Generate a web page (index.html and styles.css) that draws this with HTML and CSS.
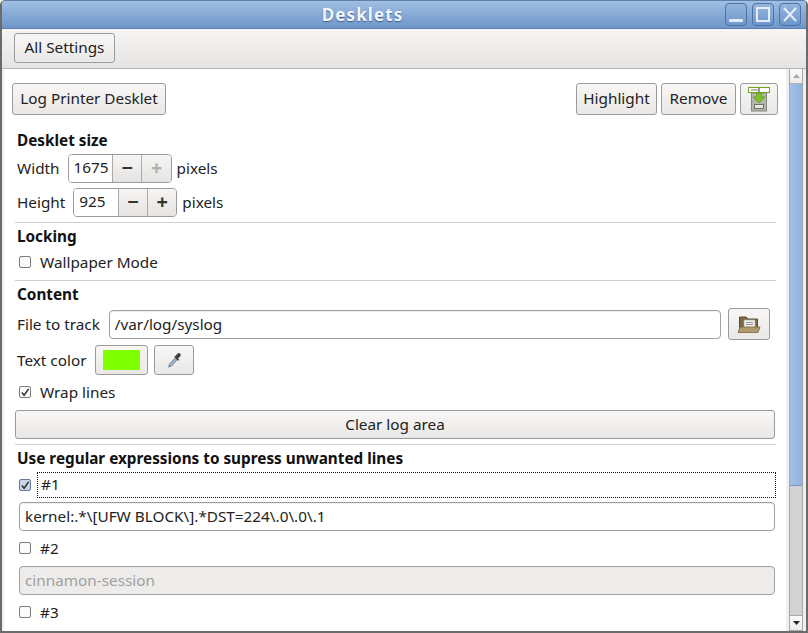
FILE: index.html
```html
<!DOCTYPE html>
<html lang="en">
<head>
    <meta charset="UTF-8">
    <title>Desklets</title>
    <link rel="stylesheet" href="styles.css">
</head>
<body>
    <div class="window">
        <div class="titlebar">
            <div class="title">Desklets</div>
            <div class="wm-buttons">
                <div class="wm-btn"><svg width="20" height="21" viewBox="0 0 20 21"><rect x="3" y="15" width="14" height="3" rx="1" fill="#e4edf8"/></svg></div>
                <div class="wm-btn"><svg width="20" height="21" viewBox="0 0 20 21"><rect x="4" y="4" width="12" height="13" fill="none" stroke="#e4edf8" stroke-width="2"/></svg></div>
                <div class="wm-btn"><svg width="20" height="21" viewBox="0 0 20 21"><path d="M4 4 L16 17 M16 4 L4 17" stroke="#e4edf8" stroke-width="2.2"/></svg></div>
            </div>
        </div>
        <div class="toolbar">
            <button class="btn settings-btn">All Settings</button>
        </div>
        <div class="main">
            <div class="content">
                <div class="top-row">
                    <button class="btn name-btn">Log Printer Desklet</button>
                    <div class="spacer"></div>
                    <button class="btn highlight-btn">Highlight</button>
                    <button class="btn remove-btn">Remove</button>
                    <button class="btn icon-btn">
                        <svg width="24" height="26" viewBox="0 0 24 26">
                            <rect x="4.5" y="7" width="15" height="18" fill="#b4b6ae" stroke="#85877f"/>
                            <rect x="7.5" y="18.5" width="9" height="4" fill="#e8e9e5" stroke="#6f716b"/>
                            <rect x="1.5" y="1.5" width="21" height="5" fill="#fff" stroke="#6ea51a"/>
                            <rect x="4" y="3" width="7" height="2" fill="#bbb"/>
                            <rect x="11.5" y="2" width="1" height="4" fill="#333"/>
                            <path d="M9.5 7 H14.5 V11 H18 L12 17 L6 11 H9.5 Z" fill="#7fc02a" stroke="#5d961b" stroke-width="0.7"/>
                        </svg>
                    </button>
                </div>

                <div class="heading heading-first">Desklet size</div>
                <div class="row size-row">
                    <span class="size-label">Width</span>
                    <div class="spinner">
                        <div class="spin-value">1675</div>
                        <div class="spin-btn">&#8722;</div>
                        <div class="spin-btn spin-off">+</div>
                    </div>
                    <span class="size-label">pixels</span>
                </div>
                <div class="row size-row size-row-2">
                    <span class="size-label">Height</span>
                    <div class="spinner">
                        <div class="spin-value">925</div>
                        <div class="spin-btn">&#8722;</div>
                        <div class="spin-btn">+</div>
                    </div>
                    <span class="size-label">pixels</span>
                </div>
                <div class="sep sep-1"></div>

                <div class="heading">Locking</div>
                <div class="check-row check-wallpaper">
                    <span class="check"></span>
                    <span>Wallpaper Mode</span>
                </div>
                <div class="sep sep-2"></div>

                <div class="heading">Content</div>
                <div class="row file-row">
                    <span>File to track</span>
                    <div class="entry file-entry">/var/log/syslog</div>
                    <button class="btn folder-btn">
                        <svg width="24" height="20" viewBox="0 0 24 20">
                            <path d="M2.5 16 V3 H9 L11 5 H20.5 V16 Z" fill="#7d6849" stroke="#5e4d33"/>
                            <rect x="7" y="6" width="11" height="8" fill="#eeeeea" stroke="#aaa" stroke-width="0.6"/>
                            <rect x="9" y="8" width="7" height="1" fill="#999"/>
                            <rect x="9" y="10" width="7" height="1" fill="#999"/>
                            <path d="M3 13 H23 L21 18.5 H1 Z" fill="#b19a6e" stroke="#7a6642" stroke-width="0.8"/>
                        </svg>
                    </button>
                </div>
                <div class="row color-row">
                    <span>Text color</span>
                    <button class="btn color-btn"><span class="swatch"></span></button>
                    <button class="btn pick-btn">
                        <svg width="16" height="18" viewBox="0 0 16 18">
                            <path d="M9 7 L3.5 13 L2.5 16 L5.5 15 L11 9 Z" fill="#9fb4cc" stroke="#5f7690" stroke-width="0.8"/>
                            <path d="M8 5.5 L12.5 10 L13 8 L12 7.5 L14.5 5 A2 2 0 0 0 11.5 2.5 L9.5 5 Z" fill="#3d3d3d"/>
                        </svg>
                    </button>
                </div>
                <div class="check-row check-wrap">
                    <span class="check checked"><svg width="11" height="11" viewBox="0 0 11 11"><path d="M2 5.5 L4.5 8.5 L9.5 1.5" fill="none" stroke="#333" stroke-width="1.7"/></svg></span>
                    <span>Wrap lines</span>
                </div>
                <button class="btn clear-btn">Clear log area</button>
                <div class="sep sep-3"></div>

                <div class="heading">Use regular expressions to supress unwanted lines</div>
                <div class="check-row check-focus">
                    <span class="check checked active"><svg width="11" height="11" viewBox="0 0 11 11"><path d="M2 5.5 L4.5 8.5 L9.5 1.5" fill="none" stroke="#333" stroke-width="1.7"/></svg></span>
                    <span class="focus-box">#1</span>
                </div>
                <div class="entry regex-entry">kernel:.*\[UFW BLOCK\].*DST=224\.0\.0\.1</div>
                <div class="check-row check-two">
                    <span class="check"></span>
                    <span>#2</span>
                </div>
                <div class="entry regex-entry disabled">cinnamon-session</div>
                <div class="check-row check-two">
                    <span class="check"></span>
                    <span>#3</span>
                </div>
            </div>
            <div class="scrollbar">
                <div class="scroll-arrow"><svg width="7" height="4" viewBox="0 0 7 4"><path d="M0 4 L3.5 0 L7 4 Z" fill="#a8a8a8"/></svg></div>
                <div class="scroll-thumb"></div>
                <div class="scroll-trough"></div>
                <div class="scroll-arrow scroll-arrow-down"><svg width="7" height="4" viewBox="0 0 7 4"><path d="M0 0 L3.5 4 L7 0 Z" fill="#222"/></svg></div>
            </div>
        </div>
    </div>
</body>
</html>
```

FILE: styles.css
```css
* { box-sizing: border-box; }
html, body { margin: 0; padding: 0; }
body { width: 808px; height: 633px; overflow: hidden; font-family: "Noto Sans", sans-serif; font-size: 15.3px; color: #222; background: #fff; }

.window { width: 808px; height: 633px; display: flex; flex-direction: column; background: #f0efed; border: 2px solid #6b6b6b; border-top: 0; border-radius: 5px 5px 0 0; overflow: hidden; }

.titlebar { height: 29px; margin: 0 -2px; display: flex; flex: none; align-items: center; background: linear-gradient(#a0bfe3, #6e96c8); border-bottom: 1px solid #5b80b0; border-top: 1px solid #5f7fa8; border-radius: 5px 5px 0 0; }
.title { flex: 1; margin-top: -1px; text-align: center; font-weight: bold; font-size: 17px; letter-spacing: 1.1px; color: #f2f6fb; text-shadow: 0 1px 1px #3f5f8a; }
.wm-buttons { display: flex; gap: 5px; margin-right: 7px; }
.wm-btn { width: 22px; height: 23px; border: 1px solid #4c72a5; border-radius: 4px; background: linear-gradient(#94b5de, #6f97cc); display: flex; }

.toolbar { height: 40px; flex: none; padding: 4px 0 0 12px; background: linear-gradient(#f6f5f3, #e5e4e2); border-bottom: 1px solid #b5b5b3; }
.settings-btn { height: 30px; width: 101px; }

.btn { font-family: inherit; font-size: inherit; color: inherit; padding: 0 0 2px; border: 1px solid #9b9b9b; border-radius: 3px; background: linear-gradient(#f8f7f6, #e9e8e6); display: inline-flex; align-items: center; justify-content: center; }

.main { flex: 1; display: flex; min-height: 0; background: #f0efed; margin-left: 2px; }
.content { flex: 1; min-width: 0; padding: 0 10px 0 11px; overflow: hidden; background: #fff; }

.top-row { height: 32px; margin: 14px -2px 0 -3px; display: flex; gap: 4px; }
.top-row .btn { height: 32px; }
.name-btn { width: 154px; }
.highlight-btn { width: 81px; }
.remove-btn { width: 75px; }
.spacer { flex: 1; }
.icon-btn { width: 38px; padding: 0; }

.heading { height: 20px; line-height: 20px; margin-top: 3px; padding-left: 2px; font-weight: bold; color: #111; white-space: nowrap; }
.heading-first { margin-top: 15px; }
.row { display: flex; align-items: center; gap: 5px; padding-left: 2px; white-space: nowrap; }

.size-row { height: 29px; margin-top: 4px; }
.size-row-2 { margin-top: 5px; }
.size-label { margin-top: -2px; }
.spinner { display: flex; flex: none; height: 29px; width: 104px; margin-left: 3px; border: 1px solid #9b9b9b; border-radius: 4px; overflow: hidden; }
.spin-value { width: 44px; padding-left: 5px; line-height: 25px; background: #fff; }
.spin-btn { width: 29.5px; border-left: 1px solid #aaa; background: linear-gradient(#f6f5f4, #e5e4e2); text-align: center; font-size: 20px; font-weight: bold; line-height: 25px; color: #333; }
.spin-off { color: #b0b0b0; }

.sep { height: 1px; background: #cfcfcd; }
.sep-1 { margin-top: 5px; }
.sep-2 { margin-top: 8px; }
.sep-3 { margin-top: 5px; }

.check-row { display: flex; align-items: center; height: 20px; padding-left: 4px; gap: 9px; }
.check { width: 12px; height: 12px; flex: none; border: 1px solid #7c7c7c; border-radius: 2px; background: #fafafa; display: flex; align-items: center; justify-content: center; }
.active { background: #c6d6ea; border-color: #66779a; }
.check-wallpaper { margin-top: 6px; }
.check-wrap { margin-top: 7px; }
.check-focus { height: 26px; margin-top: 4px; gap: 6px; }
.check-two { margin-top: 7px; }
.focus-box { flex: 1; height: 26px; line-height: 22px; padding-left: 3px; border: 1px dotted #111; }

.entry { height: 29px; line-height: 27px; padding-left: 5px; border: 1px solid #a0a0a0; border-radius: 4px; background: #fff; box-shadow: inset 0 1px 1px #eee; }
.file-row { height: 32px; margin-top: 4px; gap: 7px; }
.file-row .entry { margin-left: 2px; }
.file-entry { flex: none; width: 612px; }
.folder-btn { flex: none; width: 42px; height: 32px; padding: 0; }
.color-row { height: 30px; margin-top: 5px; gap: 6px; }
.color-row > span { margin-right: 3px; }
.color-btn { width: 53px; height: 30px; padding: 0; }
.swatch { width: 37px; height: 20px; background: #7fff00; }
.pick-btn { width: 40px; height: 30px; padding: 0; }
.clear-btn { display: flex; width: 760px; height: 29px; margin-top: 8px; }

.regex-entry { margin: 4px 0 0 4px; width: 756px; }
.disabled { margin-top: 8px; background: #edecea; color: #a0a0a0; box-shadow: none; }

.scrollbar { width: 14px; margin-left: 3px; margin-right: 3px; display: flex; flex-direction: column; flex: none; background: #d3d2d0; border: 1px solid #a8a8a8; border-top: 0; }
.scroll-arrow { height: 15px; flex: none; display: flex; align-items: center; justify-content: center; background: linear-gradient(#fbfbfa, #ecebe9); border-bottom: 1px solid #b0b0b0; }
.scroll-arrow-down { border-top: 1px solid #a8a8a8; border-bottom: 0; }
.scroll-thumb { height: 402px; flex: none; background: linear-gradient(90deg, #a3c1e6, #8fb3df); border: 1px solid #7499c9; border-width: 0 0 1px; }
.scroll-trough { flex: 1; }
```
